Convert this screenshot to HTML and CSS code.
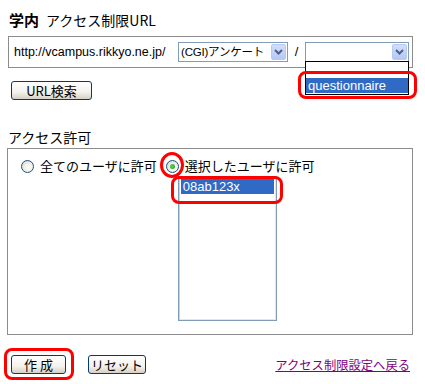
FILE: index.html
```html
<!DOCTYPE html>
<html lang="ja">
<head>
<meta charset="utf-8">
<title>アクセス制限URL</title>
<link rel="stylesheet" href="styles.css">
</head>
<body>
<div class="page">
  <div class="title"><b class="title-strong">学内</b><span class="title-rest">アクセス制限URL</span></div>

  <div class="url-box">
    <span class="url-text">http://vcampus.rikkyo.ne.jp/</span>
    <span class="select sel1"><span class="sel-value sel-value-1">(CGI)アンケート</span><span class="sel-arrow"><svg width="9" height="6" viewBox="0 0 9 6"><path d="M1 1 L4.5 4.5 L8 1" fill="none" stroke="#4d6185" stroke-width="2"/></svg></span></span>
    <span class="slash">/</span>
    <span class="select sel2"><span class="sel-value"></span><span class="sel-arrow"><svg width="9" height="6" viewBox="0 0 9 6"><path d="M1 1 L4.5 4.5 L8 1" fill="none" stroke="#4d6185" stroke-width="2"/></svg></span>
      <span class="dropdown">
        <span class="opt"></span>
        <span class="opt opt-sel">questionnaire</span>
      </span>
    </span>
  </div>

  <button class="btn btn-search">URL検索</button>

  <div class="section-label">アクセス許可</div>

  <div class="perm-box">
    <label class="radio-item"><span class="radio"></span><span>全てのユーザに許可</span></label>
    <div class="radio-col">
      <label class="radio-item"><span class="radio checked"><span class="dot"></span></span><span>選択したユーザに許可</span></label>
      <div class="listbox">
        <div class="list-item selected">08ab123x</div>
      </div>
    </div>
  </div>

  <div class="footer">
    <button class="btn btn-create">作 成</button>
    <button class="btn btn-reset">リセット</button>
    <a class="back-link" href="#">アクセス制限設定へ戻る</a>
  </div>

  <span class="mark mark-q"></span>
  <span class="mark mark-radio"></span>
  <span class="mark mark-list"></span>
  <span class="mark mark-create"></span>
</div>
</body>
</html>
```

FILE: styles.css
```css
html, body {
  margin: 0;
  padding: 0;
  background: #fff;
}
body {
  font-family: "Liberation Sans", "Noto Sans CJK JP", sans-serif;
  font-size: 13px;
  color: #000;
}
.page {
  position: relative;
  width: 405px;
  margin-left: 8px;
  padding-top: 10px;
  height: 374px;
}
.title {
  height: 20px;
  line-height: 20px;
  display: flex;
  align-items: baseline;
  font-family: "Noto Sans CJK JP", sans-serif;
}
.title-strong {
  font-size: 15px;
  font-weight: bold;
  margin-left: 1px;
}
.title-rest {
  font-size: 14px;
  margin-left: 7px;
}
.url-box {
  margin-top: 6px;
  height: 30px;
  border: 1px solid #8c8c8c;
  display: flex;
  align-items: center;
  padding-left: 5px;
}
.url-text {
  line-height: 16px;
  white-space: nowrap;
  width: 164px;
  font-size: 12.5px;
}
.select {
  position: relative;
  display: flex;
  align-items: center;
  box-sizing: border-box;
  height: 20px;
  border: 1px solid #7f9db9;
  background: #fff;
}
.sel1 {
  width: 110px;
}
.sel2 {
  width: 104px;
}
.sel-value {
  flex: 1;
  padding-left: 3px;
  line-height: 16px;
  white-space: nowrap;
  overflow: hidden;
  font-size: 12.5px;
}
.sel-value-1 {
  font-size: 11.5px;
  padding-left: 2px;
  letter-spacing: -0.2px;
}
.sel-arrow {
  width: 15px;
  height: 16px;
  margin-right: 1px;
  box-sizing: border-box;
  border: 1px solid #b8c9f2;
  border-radius: 2px;
  background: linear-gradient(#d2defc, #b4c8f6);
  display: flex;
  align-items: center;
  justify-content: center;
}
.slash {
  width: 17px;
  text-align: center;
  line-height: 16px;
}
.dropdown {
  position: absolute;
  left: -1px;
  top: 18px;
  width: 104px;
  box-sizing: border-box;
  border: 1px solid #000;
  background: #fff;
  display: flex;
  flex-direction: column;
  padding: 1px 0 1px;
}
.opt {
  height: 15px;
  line-height: 15px;
  padding-left: 2px;
  font-size: 13px;
}
.opt-sel {
  background: #316ac5;
  color: #fff;
}
.btn {
  font-family: "Noto Sans CJK JP", sans-serif;
  font-size: 13px;
  line-height: 15px;
  padding: 0;
  box-sizing: border-box;
  height: 19px;
  border: 1px solid #003c74;
  border-radius: 3px;
  background: linear-gradient(#ffffff 0%, #f3f2ec 60%, #d6d0c5 100%);
  color: #000;
  display: flex;
  align-items: center;
  justify-content: center;
}
.btn-search {
  margin-top: 13px;
  margin-left: 3px;
  width: 81px;
}
.section-label {
  margin-top: 28px;
  height: 18px;
  line-height: 18px;
  font-size: 14px;
  font-family: "Noto Sans CJK JP", sans-serif;
}
.perm-box {
  margin-top: 2px;
  margin-left: -1px;
  height: 187px;
  border: 1px solid #8c8c8c;
  display: flex;
  align-items: flex-start;
  padding: 10px 0 0 13px;
  box-sizing: border-box;
  font-family: "Noto Sans CJK JP", sans-serif;
}
.radio-item {
  display: flex;
  align-items: center;
  height: 14px;
  line-height: 14px;
  white-space: nowrap;
  font-size: 13px;
}
.radio {
  width: 13px;
  height: 13px;
  box-sizing: border-box;
  border: 1px solid #1c5180;
  border-radius: 50%;
  background: radial-gradient(circle at 60% 60%, #ffffff 0%, #f0efea 45%, #d2d2c8 100%);
  margin-right: 6px;
  display: flex;
  align-items: center;
  justify-content: center;
}
.radio-col {
  margin-left: 9px;
  display: flex;
  flex-direction: column;
}
.dot {
  width: 5px;
  height: 5px;
  border-radius: 50%;
  background: radial-gradient(circle at 40% 40%, #5fd35f, #1d9a1d);
}
.listbox {
  margin-top: 3px;
  margin-left: 12px;
  width: 99px;
  height: 145px;
  box-sizing: border-box;
  border: 1px solid #7f9db9;
  box-shadow: inset 1px 1px 0 #d4d0c8, inset -1px -1px 0 #e8e6e0;
  padding: 2px;
}
.list-item {
  height: 15px;
  line-height: 15px;
  padding-left: 2px;
  font-family: "Liberation Sans", sans-serif;
  font-size: 13px;
}
.list-item.selected {
  background: #316ac5;
  color: #fff;
}
.footer {
  margin-top: 20px;
  display: flex;
  align-items: center;
  height: 19px;
}
.btn-create {
  width: 55px;
  margin-left: 3px;
}
.btn-reset {
  width: 58px;
  margin-left: 22px;
}
.back-link {
  margin-left: auto;
  margin-right: 3px;
  color: #800080;
  text-decoration: underline;
  font-family: "Noto Sans CJK JP", sans-serif;
  font-size: 12.3px;
  line-height: 16px;
}
.mark {
  position: absolute;
  border: 3px solid #ff0000;
  border-radius: 8px;
  box-sizing: border-box;
}
.mark-q {
  left: 290px;
  top: 71px;
  width: 119px;
  height: 28px;
}
.mark-radio {
  left: 152px;
  top: 152px;
  width: 24px;
  height: 26px;
  border-radius: 50%;
}
.mark-list {
  left: 163px;
  top: 176px;
  width: 112px;
  height: 28px;
}
.mark-create {
  left: -4px;
  top: 348px;
  width: 70px;
  height: 32px;
}
```
